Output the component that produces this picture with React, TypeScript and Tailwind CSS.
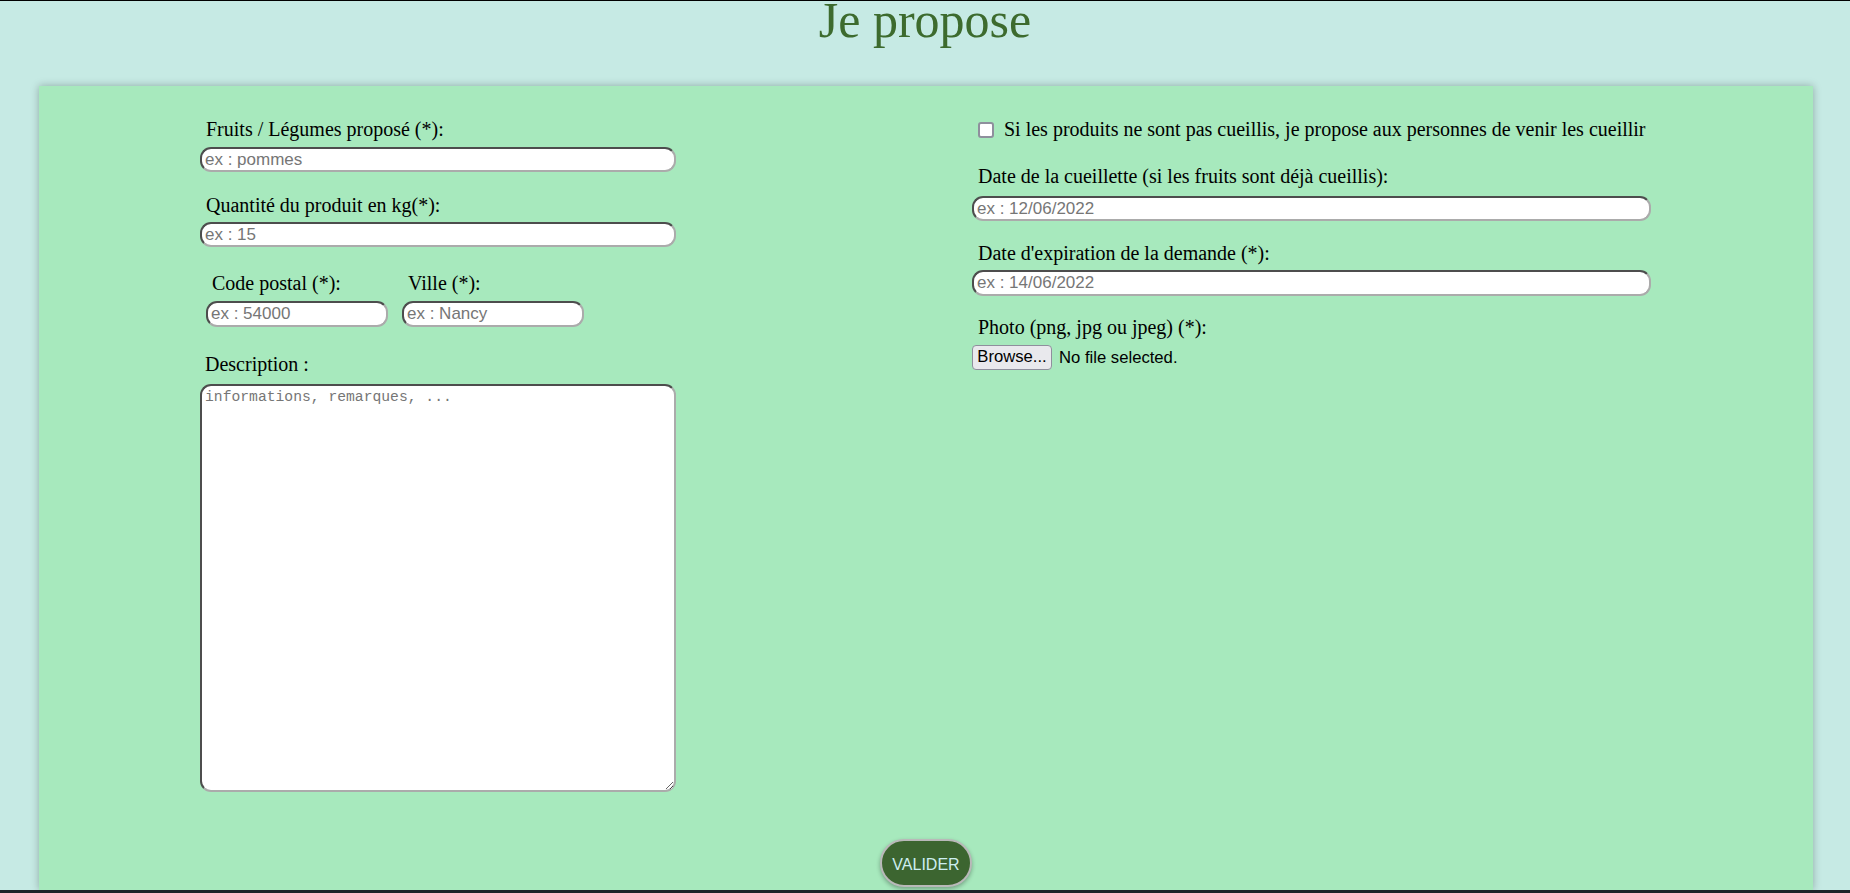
const serif = "font-['Liberation_Serif','Times_New_Roman',serif]"
const sans = "font-['Liberation_Sans',Arial,sans-serif]"
const inputCls =
  "block h-[25px] bg-white border-2 border-t-[#4d4d4d] border-l-[#4d4d4d] border-b-[#ababab] border-r-[#ababab] rounded-[11px] pl-[3px] text-[17px] text-black placeholder:text-[#767676] outline-none " + sans
const labelCls = "block text-[20px] leading-[23px] text-black " + serif

function Field({ label, placeholder, className, top, gap }: { label: string; placeholder: string; className: string; top: string; gap: string }) {
  return (
    <div className={top}>
      <label className={labelCls + ' pl-[6px]'}>{label}</label>
      <input type="text" placeholder={placeholder} className={inputCls + ' ' + gap + ' ' + className} />
    </div>
  )
}

export default function App() {
  return (
    <div className="min-h-[893px] bg-[#c6eae4] border-t border-black flex flex-col overflow-hidden">
      <h1 className={"text-center text-[50px] leading-[38px] text-[#3d6b2e] " + serif}>Je propose</h1>

      <form onSubmit={(e) => e.preventDefault()}
        className="mt-[47px] ml-[39px] w-[1774px] h-[804px] bg-[#a7e9bd] shadow-[0_0_8px_rgba(0,0,0,0.28)] pt-[32px] flex flex-col">
        <div className="flex">
          {/* colonne gauche */}
          <div className="ml-[161px] w-[476px]">
            <Field label="Fruits / Légumes proposé (*):" placeholder="ex : pommes" className="w-[476px]" top="" gap="mt-[6px]" />
            <Field label="Quantité du produit en kg(*):" placeholder="ex : 15" className="w-[476px]" top="mt-[22px]" gap="mt-[5px]" />
            <div className="flex gap-[14px] ml-[6px] mt-[25px]">
              <Field label="Code postal (*):" placeholder="ex : 54000" className="w-[182px] h-[26px]" top="" gap="mt-[6px]" />
              <Field label="Ville (*):" placeholder="ex : Nancy" className="w-[182px] h-[26px]" top="" gap="mt-[6px]" />
            </div>
            <div className="mt-[26px]">
              <label className={labelCls + ' pl-[5px]'}>Description :</label>
              <textarea placeholder="informations, remarques, ..."
                className="block mt-[8px] w-[476px] h-[408px] bg-white border-2 border-t-[#4d4d4d] border-l-[#4d4d4d] border-b-[#ababab] border-r-[#ababab] rounded-[11px] px-[3px] pt-[2px] text-[14.7px] leading-[18px] placeholder:text-[#767676] outline-none font-['Liberation_Mono','DejaVu_Sans_Mono',monospace]" />
            </div>
          </div>

          {/* colonne droite */}
          <div className="ml-[296px] w-[680px]">
            <label className={"flex items-center gap-[10px] pl-[6px] text-[20px] leading-[23px] " + serif}>
              <span className="w-[16px] h-[16px] bg-white border-2 border-[#8f8f9d] rounded-[3px] mt-[1px]" />
              Si les produits ne sont pas cueillis, je propose aux personnes de venir les cueillir
            </label>
            <Field label="Date de la cueillette (si les fruits sont déjà cueillis):" placeholder="ex : 12/06/2022" className="w-[679px] h-[24px]" top="mt-[24px]" gap="mt-[8px]" />
            <Field label="Date d'expiration de la demande (*):" placeholder="ex : 14/06/2022" className="w-[679px] h-[26px]" top="mt-[21px]" gap="mt-[5px]" />
            <div className="mt-[20px]">
              <label className={labelCls + ' pl-[6px]'}>Photo (png, jpg ou jpeg) (*):</label>
              <div className={"flex items-center gap-[7px] mt-[6px] text-[16.67px] text-black " + sans}>
                <button type="button" className="h-[25px] w-[80px] bg-[#e9e9ed] border border-[#8f8f9d] rounded-[4px] text-[16.67px] leading-none">Browse...</button>
                <span>No file selected.</span>
              </div>
            </div>
          </div>
        </div>

        <div className="flex justify-center mt-[47px]">
          <button type="submit"
            className={"w-[92px] h-[48px] rounded-full bg-[#3c6530] border-2 border-[#b9b9b9] text-[#cdeef0] text-[16px] pt-[4px] shadow-[0_2px_4px_rgba(0,0,0,0.3)] " + sans}>
            VALIDER
          </button>
        </div>
      </form>
      <div className="h-[3px] bg-[#1e2428]" />
    </div>
  )
}
